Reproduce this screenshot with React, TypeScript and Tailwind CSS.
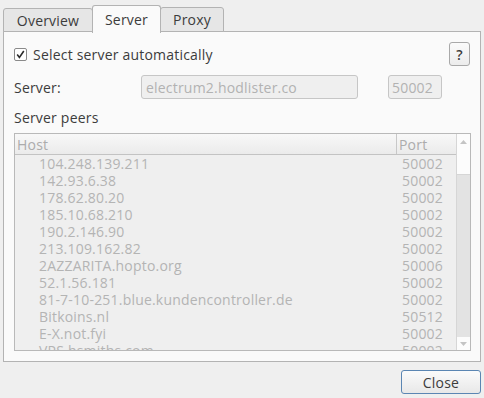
import React from 'react';

const peers: [string, string][] = [
  ['104.248.139.211', '50002'],
  ['142.93.6.38', '50002'],
  ['178.62.80.20', '50002'],
  ['185.10.68.210', '50002'],
  ['190.2.146.90', '50002'],
  ['213.109.162.82', '50002'],
  ['2AZZARITA.hopto.org', '50006'],
  ['52.1.56.181', '50002'],
  ['81-7-10-251.blue.kundencontroller.de', '50002'],
  ['Bitkoins.nl', '50512'],
  ['E-X.not.fyi', '50002'],
  ['VPS.hsmiths.com', '50002'],
];

export default function App() {
  return (
    <div
      className="relative w-[484px] h-[398px] bg-[#efefef] text-[14px] leading-[17px] tracking-[0.2px] text-[#3c3c3c] overflow-hidden"
      style={{ fontFamily: '"Open Sans", "DejaVu Sans", sans-serif' }}
    >
      {/* tabs */}
      <div className="flex items-end h-[32px] pl-[3px]">
        <div className="h-[24px] w-[90px] border border-[#b3b3b3] rounded-t-[3px] bg-[#e6e6e6] flex items-center justify-center -mr-px">
          Overview
        </div>
        <div className="relative z-10 h-[28px] w-[69px] border border-b-0 border-[#b3b3b3] rounded-t-[3px] bg-[#fafafa] flex items-center justify-center -mb-px pb-px">
          Server
        </div>
        <div className="h-[25px] w-[64px] border border-[#b3b3b3] rounded-t-[3px] bg-[#e6e6e6] flex items-center justify-center -ml-px">
          Proxy
        </div>
      </div>

      {/* panel */}
      <div className="ml-[3px] w-[478px] h-[331px] -mt-px border border-[#b3b3b3] bg-[#fafafa] pl-[10px] pr-[9px] pt-[10px]">
        <div className="flex items-center justify-between h-[24px]">
          <div className="flex items-center">
            <div className="w-[13px] h-[13px] border border-[#8a8a8a] bg-white rounded-[2px] flex items-center justify-center">
              <svg width="9" height="9" viewBox="0 0 9 9">
                <path d="M1.2 4.6 L3.4 7.4 L7.8 1" fill="none" stroke="#2a2a2a" strokeWidth="1.6" />
              </svg>
            </div>
            <span className="ml-[6px]">Select server automatically</span>
          </div>
          <div className="w-[21px] h-[24px] mr-px border border-[#a9a9a9] rounded-[3px] bg-gradient-to-b from-[#fbfbfb] to-[#ececec] flex items-center justify-center font-semibold text-[14px]">
            ?
          </div>
        </div>

        <div className="flex items-center h-[24px] mt-[9px]">
          <span className="w-[127px]">Server:</span>
          <div className="w-[217px] h-[24px] border border-[#c6c6c6] rounded-[3px] bg-[#efefef] text-[#b2b2b2] flex items-center pl-[4px]">
            electrum2.hodlister.co
          </div>
          <div className="ml-[30px] w-[54px] h-[24px] border border-[#c6c6c6] rounded-[3px] bg-[#efefef] text-[#b2b2b2] flex items-center pl-[3px]">
            50002
          </div>
        </div>

        <div className="h-[18px] mt-[9px] flex items-center">Server peers</div>

        {/* peers table */}
        <div className="mt-[7px] h-[218px] border border-[#b9b9b9] bg-[#efefef] flex overflow-hidden">
          <div className="flex-1 flex flex-col overflow-hidden">
            <div className="h-[21px] shrink-0 flex border-b border-[#c3c3c3] bg-gradient-to-b from-[#f8f8f8] to-[#ebebeb] text-[#acacac]">
              <div className="w-[381px] pl-[2px] flex items-center">Host</div>
              <div className="flex-1 border-l border-[#c8c8c8] pl-[2px] flex items-center">Port</div>
            </div>
            {peers.map(([host, port]) => (
              <div key={host} className="h-[17px] shrink-0 flex items-center text-[#b4b4b4]">
                <div className="w-[381px] pl-[24px] whitespace-nowrap">{host}</div>
                <div className="pl-[6px]">{port}</div>
              </div>
            ))}
          </div>
          {/* scrollbar */}
          <div className="w-[14px] border-l border-[#d6d6d6] flex flex-col">
            <div className="h-[15px] bg-[#fcfcfc] flex items-center justify-center">
              <svg width="7" height="4" viewBox="0 0 7 4"><path d="M0 4 L3.5 0 L7 4Z" fill="#c4c4c4" /></svg>
            </div>
            <div className="h-[26px] bg-[#fcfcfc] border-b border-[#d6d6d6]" />
            <div className="flex-1 bg-[#e3e3e3]" />
            <div className="h-[13px] bg-[#fcfcfc] flex items-center justify-center">
              <svg width="7" height="4" viewBox="0 0 7 4"><path d="M0 0 L3.5 4 L7 0Z" fill="#c4c4c4" /></svg>
            </div>
          </div>
        </div>
      </div>

      {/* footer */}
      <div className="flex justify-end pr-[3px] mt-[8px]">
        <div className="w-[80px] h-[24px] border border-[#5b86b3] rounded-[3px] bg-gradient-to-b from-[#fbfbfb] to-[#e8e8e8] flex items-center justify-center">
          Close
        </div>
      </div>
    </div>
  );
}
